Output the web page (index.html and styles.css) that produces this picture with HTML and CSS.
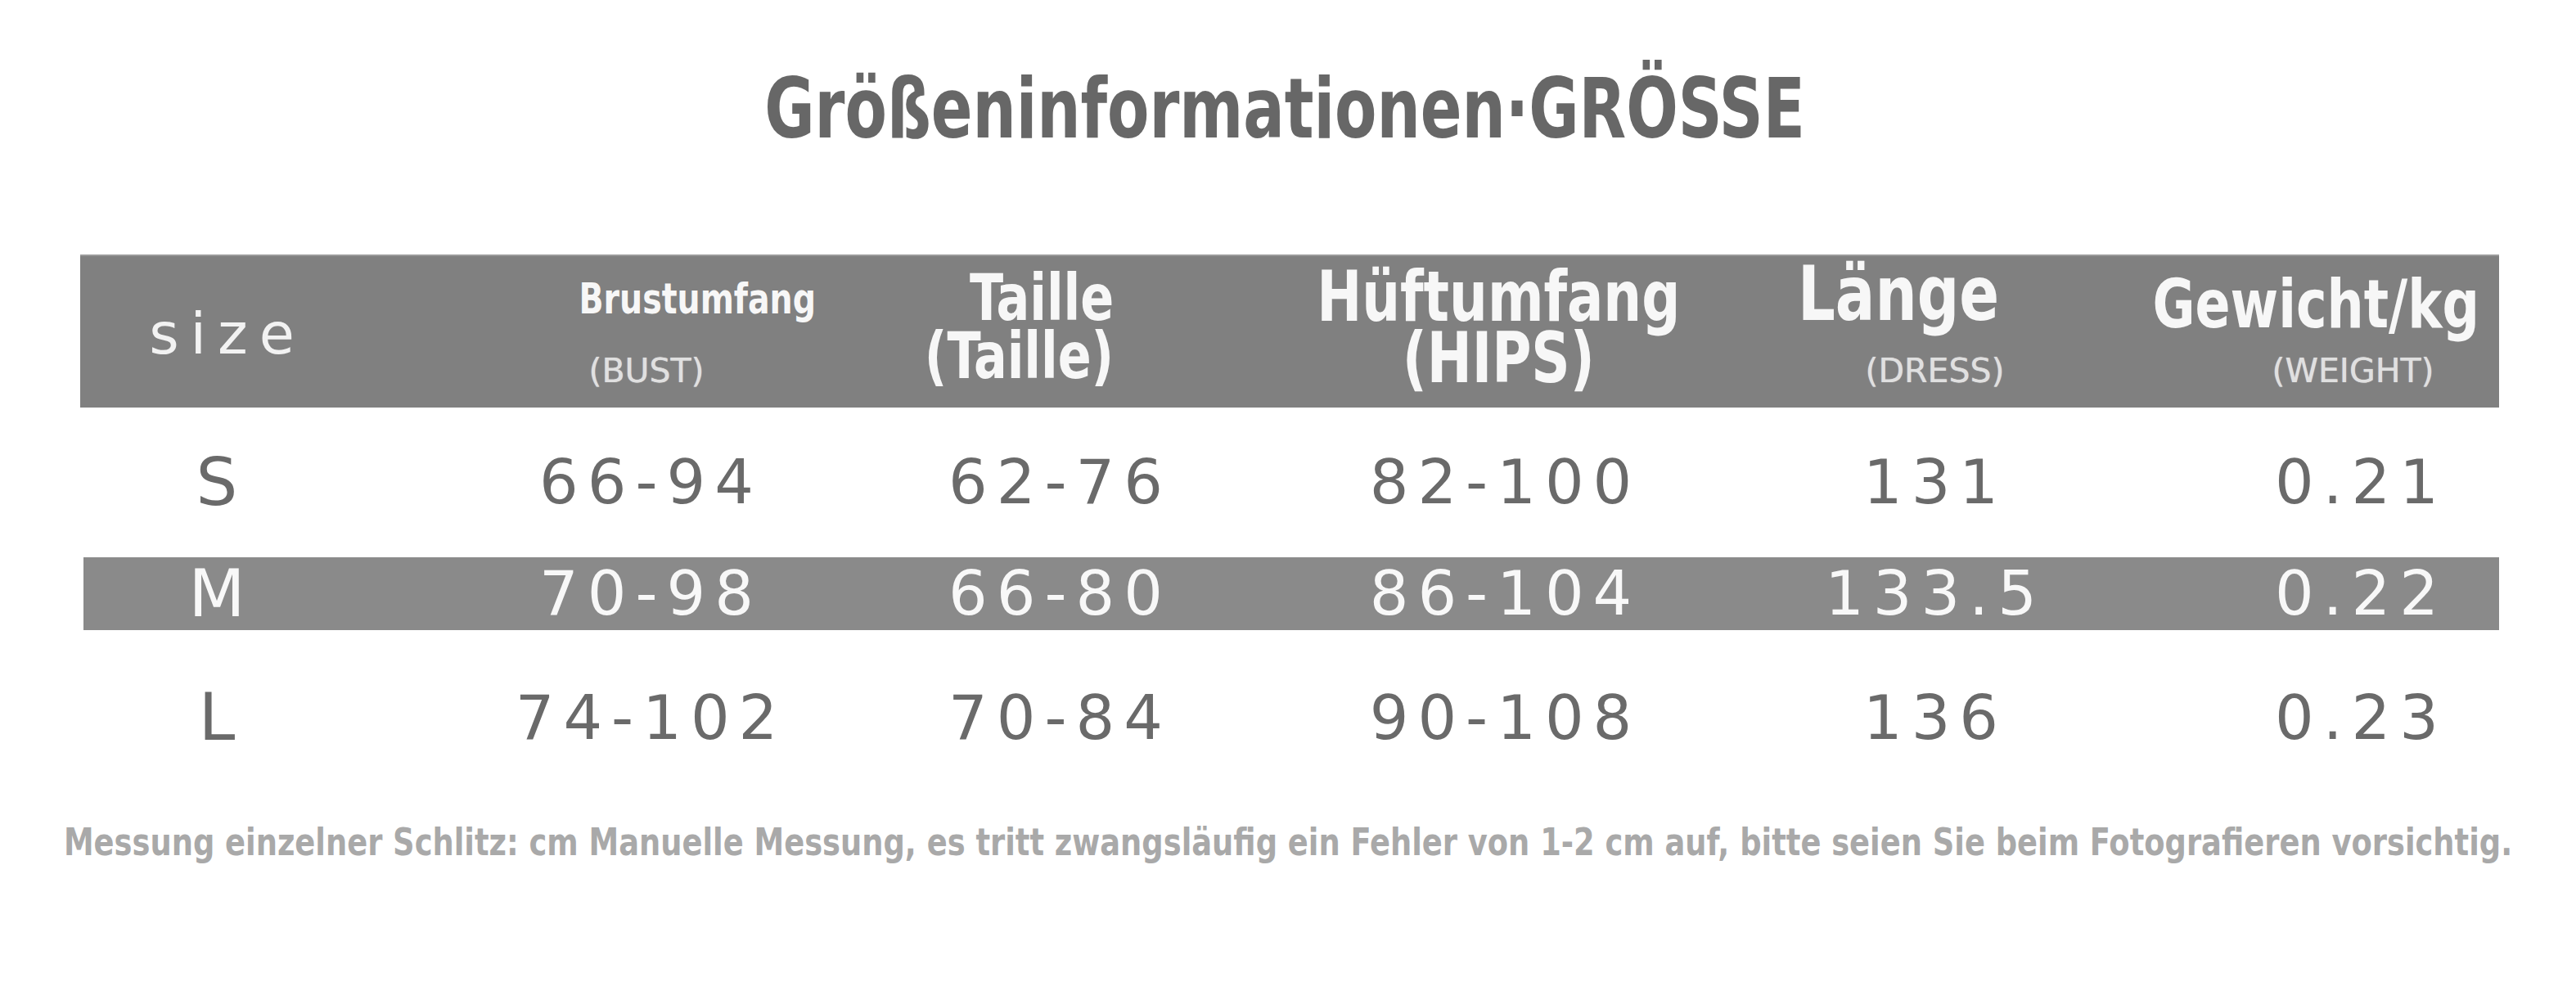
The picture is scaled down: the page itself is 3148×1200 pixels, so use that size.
FILE: index.html
```html
<!DOCTYPE html>
<html lang="de">
<head>
<meta charset="utf-8">
<title>Größeninformationen</title>
<link rel="stylesheet" href="styles.css">
</head>
<body>
<div class="page">
  <h1 class="title"><span class="sq sq-title">Größeninformationen·GRÖSSE</span></h1>

  <div class="chart">
    <div class="row head">
      <div class="cell c1"><span class="size-lbl">size</span></div>
      <div class="cell c2">
        <span class="h sq h-brust">Brustumfang</span>
        <span class="sub sub-bust">(BUST)</span>
      </div>
      <div class="cell c3">
        <span class="h sq h-taille">Taille<br>(Taille)</span>
      </div>
      <div class="cell c4">
        <span class="h sq h-hueft">Hüftumfang<br>(HIPS)</span>
      </div>
      <div class="cell c5">
        <span class="h sq h-laenge">Länge</span>
        <span class="sub sub-dress">(DRESS)</span>
      </div>
      <div class="cell c6">
        <span class="h sq h-gew">Gewicht/kg</span>
        <span class="sub sub-weight">(WEIGHT)</span>
      </div>
    </div>

    <div class="row data row-s">
      <div class="cell c1"><span class="sz">S</span></div>
      <div class="cell c2"><span class="val">66-94</span></div>
      <div class="cell c3"><span class="val">62-76</span></div>
      <div class="cell c4"><span class="val">82-100</span></div>
      <div class="cell c5"><span class="val">131</span></div>
      <div class="cell c6"><span class="val">0.21</span></div>
    </div>

    <div class="row data row-m">
      <div class="cell c1"><span class="sz">M</span></div>
      <div class="cell c2"><span class="val">70-98</span></div>
      <div class="cell c3"><span class="val">66-80</span></div>
      <div class="cell c4"><span class="val">86-104</span></div>
      <div class="cell c5"><span class="val">133.5</span></div>
      <div class="cell c6"><span class="val">0.22</span></div>
    </div>

    <div class="row data row-l">
      <div class="cell c1"><span class="sz">L</span></div>
      <div class="cell c2"><span class="val">74-102</span></div>
      <div class="cell c3"><span class="val">70-84</span></div>
      <div class="cell c4"><span class="val">90-108</span></div>
      <div class="cell c5"><span class="val">136</span></div>
      <div class="cell c6"><span class="val">0.23</span></div>
    </div>
  </div>

  <p class="note"><span class="sq sq-note">Messung einzelner Schlitz: cm Manuelle Messung, es tritt zwangsläufig ein Fehler von 1-2 cm auf, bitte seien Sie beim Fotografieren vorsichtig.</span></p>
</div>
</body>
</html>
```

FILE: styles.css
```css
* { box-sizing: border-box; }

html, body {
  margin: 0;
  padding: 0;
  background: #ffffff;
}

.page {
  width: 3148px;
  height: 1200px;
  overflow: hidden;
  font-family: "DejaVu Sans", "Liberation Sans", sans-serif;
}

.sq {
  display: inline-block;
  font-weight: 700;
  font-stretch: condensed;
  white-space: nowrap;
  transform: scaleX(0.86);
  transform-origin: 50% 50%;
}

/* ---------- title ---------- */
.title {
  margin: 82px 0 0;
  height: 102px;
  display: flex;
  justify-content: center;
  font-size: 102px;
  line-height: 1;
  color: #676767;
  font-weight: 700;
}
.sq-title { transform: scaleX(0.815); padding-right: 10px; }

/* ---------- chart ---------- */
.chart {
  margin: 127px 0 0 98px;
  width: 2956px;
}

.row {
  display: grid;
  grid-template-columns: 430px 512px 522px 536px 523px 433px;
}

.cell {
  display: flex;
  align-items: center;
  justify-content: center;
  white-space: nowrap;
}

/* header */
.head {
  height: 187px;
  background: #808080;
  color: #f6f6f6;
  box-shadow: inset 0 2px 0 #9a9a9a;
}
.head .cell {
  flex-direction: column;
  justify-content: flex-start;
  align-items: center;
}
.head .c1 {
  justify-content: center;
  padding-right: 84px;
}

.size-lbl {
  font-size: 70px;
  line-height: 1;
  letter-spacing: 14px;
  margin-right: -14px;
  color: #f2f2f2;
  padding-top: 6px;
}

.h {
  display: block;
  line-height: 1;
  color: #f7f7f7;
}
.sub {
  display: block;
  font-size: 41px;
  line-height: 1;
  color: #e0e0e0;
  text-shadow: 0 0 1px #e0e0e0;
}

.h-brust  { font-size: 51px; margin-top: 29px; margin-left: 136px; }
.sub-bust { margin-top: 42px; margin-left: 12px; }

.h-taille {
  font-size: 78px;
  line-height: 71px;
  margin-top: 18px;
  margin-right: 110px;
  text-align: right;
}

.h-hueft {
  font-size: 85px;
  line-height: 75px;
  margin-top: 14px;
  margin-left: 2px;
  text-align: center;
}

.h-laenge { font-size: 93px; margin-top: 2px; margin-right: 80px; }
.sub-dress { margin-top: 27px; margin-left: 10px; }

.h-gew { font-size: 82px; margin-top: 20px; margin-right: 14px; }
.sub-weight { margin-top: 20px; margin-left: 76px; }

/* data rows */
.data { color: #6a6a6a; }
.row-s { height: 183px; }
.row-m {
  height: 89px;
  background: #8a8a8a;
  color: #f8f8f8;
  margin-left: 4px;
}
.row-l { height: 214px; }

.val {
  font-size: 75px;
  line-height: 1;
  letter-spacing: 11px;
  margin-right: -11px;
}
.sz {
  font-size: 80px;
  line-height: 1;
}

.data .c1 { padding-right: 96px; }
.data .c2 { padding-left: 12px; }
.data .c3 { padding-right: 22px; }
.data .c4 { padding-left: 8px; }
.data .c6 { padding-left: 85px; }
.row-m .c1 { padding-right: 104px; }
.row-m .c2 { padding-left: 4px; }
.row-m .c3 { padding-right: 30px; }
.row-m .c4 { padding-left: 0; }
.row-m .c5 { padding-right: 8px; }
.row-m .c6 { padding-left: 77px; }

/* note */
.note {
  margin: 22px 0 0;
  display: flex;
  justify-content: center;
  font-size: 46px;
  line-height: 1;
  color: #a9a9a9;
}
.sq-note { transform: scaleX(0.89); }
```
